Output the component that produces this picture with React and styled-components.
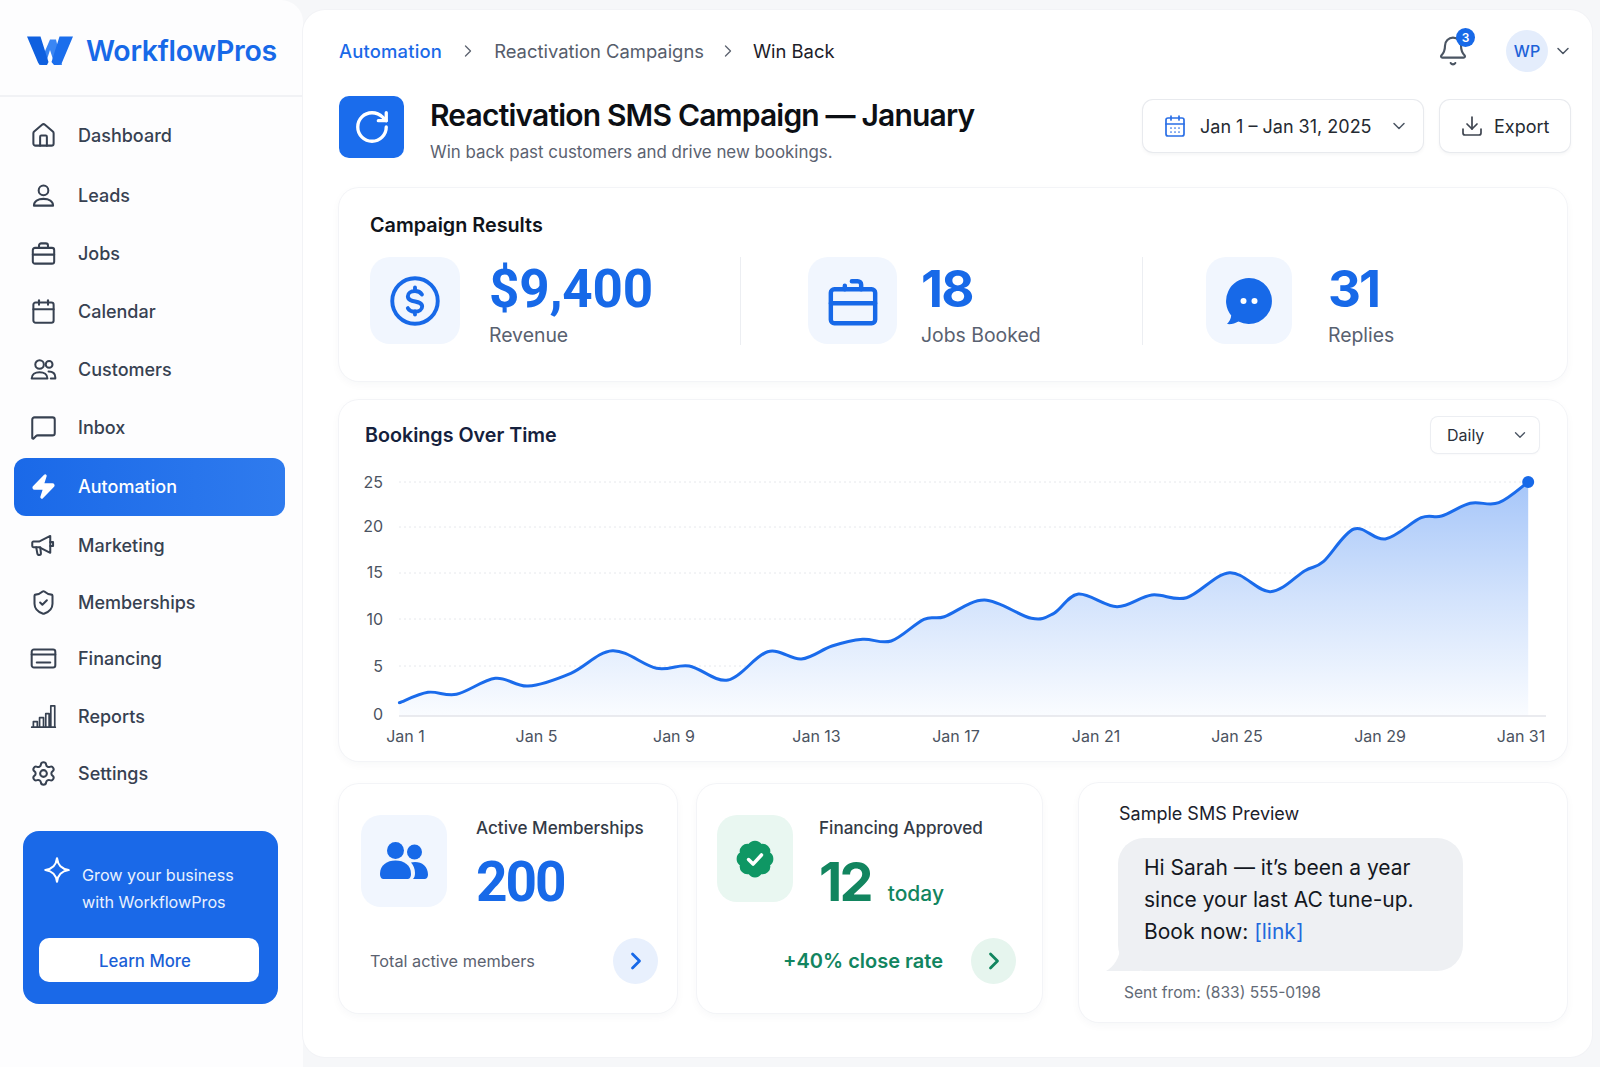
import React from "react";
import styled, { createGlobalStyle } from "styled-components";
import { Home, Calendar, MessageSquare, Zap, ShieldCheck, Settings, RotateCw, Bell, ChevronDown, ChevronRight, CalendarDays, Download } from "lucide-react";

const Global = createGlobalStyle`
  * { box-sizing: border-box; }
  html, body { margin: 0; padding: 0; background: #f6f7f9; }
  body { font-family: Inter, "Liberation Sans", sans-serif; -webkit-font-smoothing: antialiased; }
`;

const Page = styled.div`
  display: grid;
  grid-template-columns: 303px minmax(0, 1fr);
  width: 1600px;
  height: 1067px;
  overflow: hidden;
`;

const Sidebar = styled.aside`
  background: #fdfdfe;
  border-top-right-radius: 22px;
  display: flex;
  flex-direction: column;
`;
const Brand = styled.div`
  height: 97px;
  border-bottom: 2px solid #f1f2f5;
  display: flex;
  align-items: center;
  gap: 13px;
  padding: 6px 0 0 27px;
`;
const BrandName = styled.span`
  font-size: 28.5px;
  font-weight: 600;
  letter-spacing: -0.3px;
  color: #1769e8;
`;
const NavList = styled.nav`
  display: flex;
  flex-direction: column;
  margin-top: 10px;
`;
const NavItem = styled.div`
  height: 57.8px;
  margin: ${p => p.$nudge || 0}px 18px 0 14px;
  padding-left: 16px;
  display: flex;
  align-items: center;
  gap: 21px;
  border-radius: 12px;
  font-size: 18px;
  font-weight: 450;
  color: ${p => (p.$active ? "#fff" : "#374151")};
  background: ${p => (p.$active ? "linear-gradient(90deg,#1a69e8,#2f7bee)" : "transparent")};
  svg { flex: none; width: 27px; height: 27px; }
`;
const Promo = styled.div`
  margin: 28px 0 0 23px;
  width: 255px;
  height: 173px;
  padding: 25px 19px 0 16px;
  background: #1a69e8;
  border-radius: 16px;
  color: #e9f1fe;
`;
const PromoHead = styled.div`
  display: flex;
  gap: 11px;
  padding-left: 4px;
  height: 61px;
  font-size: 16.2px;
  line-height: 27.5px;
  svg { flex: none; width: 28px; height: 28px; }
`;
const PromoText = styled.div`
  margin-top: 6px;
`;
const PromoButton = styled.button`
  width: 220px;
  height: 44px;
  margin-top: 21px;
  padding: 2px 8px 0 0;
  border: none;
  border-radius: 10px;
  background: #fff;
  color: #1b5fd6;
  font: 500 16.8px Inter, sans-serif;
`;

const Main = styled.main`
  margin: 10px 8px 10px 0;
  padding: 0 25px 0 36px;
  background: #fff;
  border-radius: 22px;
  box-shadow: 0 0 0 1px #f2f3f6;
`;
const TopBar = styled.header`
  display: flex;
  align-items: center;
  justify-content: space-between;
  padding: 20px 0 24px;
`;
const Crumbs = styled.div`
  display: flex;
  align-items: center;
  gap: 16px;
  font-size: 18.4px;
  svg { width: 20px; height: 20px; color: #5d6470; }
  svg:last-of-type { margin: 0 -1.5px; }
`;
const Crumb = styled.span`
  color: ${p => p.$tone};
  font-weight: ${p => (p.$tone === "#1a69e8" ? 500 : 400)};
  letter-spacing: ${p => (p.$tone === "#1a69e8" ? "0.2px" : "0")};
`;
const TopRight = styled.div`
  display: flex;
  align-items: center;
  margin-right: -6px;
`;
const BellWrap = styled.div`
  position: relative;
  width: 32px;
  height: 32px;
  margin-right: 37px;
  color: #4b5563;
  svg { width: 32px; height: 32px; stroke-width: 1.6; }
`;
const BellBadge = styled.span`
  position: absolute;
  top: -7px;
  right: -6px;
  width: 19px;
  height: 19px;
  border-radius: 50%;
  background: #1769e8;
  color: #fff;
  font-size: 12px;
  font-weight: 600;
  display: flex;
  align-items: center;
  justify-content: center;
`;
const Avatar = styled.div`
  width: 42px;
  height: 42px;
  border-radius: 50%;
  background: #e4edfc;
  color: #1d62d8;
  font-size: 16px;
  font-weight: 500;
  display: flex;
  align-items: center;
  justify-content: center;
  margin-right: 5px;
`;
const SmallChevron = styled.span`
  display: flex;
  color: #4b5563;
  svg { width: 20px; height: 20px; }
`;
const TitleRow = styled.section`
  display: flex;
  justify-content: space-between;
  align-items: flex-start;
  height: 62px;
`;
const TitleLeft = styled.div`
  display: flex;
  gap: 26px;
`;
const TitleIcon = styled.div`
  width: 65px;
  height: 62px;
  border-radius: 10px;
  background: #1a6cec;
  color: #fff;
  display: flex;
  align-items: center;
  justify-content: center;
  svg { width: 38px; height: 38px; stroke-width: 2.1; }
`;
const Title = styled.h1`
  margin: 0;
  font-size: 30px;
  line-height: 38px;
  font-weight: 600;
  letter-spacing: -0.82px;
  color: #0c0f14;
`;
const Subtitle = styled.p`
  margin: 7px 0 0;
  font-size: 16.9px;
  line-height: 22px;
  color: #5b6270;
`;
const Actions = styled.div`
  display: flex;
  gap: 17px;
  margin: 4px -3px 0 0;
`;
const ActionButton = styled.div`
  height: 52px;
  width: ${p => p.$width}px;
  padding-left: 20px;
  display: flex;
  align-items: center;
  gap: ${p => p.$gap}px;
  background: #fff;
  border-radius: 10px;
  box-shadow: 0 0 0 1px #e8eaee, 0 2px 4px rgba(20, 30, 50, 0.06);
  font-size: 18px;
  color: #252a32;
  svg { flex: none; }
`;
const ActionLabel = styled.span`
  white-space: nowrap;
`;
const Card = styled.section`
  background: #fff;
  border-radius: 20px;
  box-shadow: 0 0 0 1px #f3f4f7, 0 3px 10px rgba(30, 45, 80, 0.04);
`;
const ResultsCard = styled(Card)`
  margin-top: 30px;
  height: 193px;
  padding: 25px 0 0 31px;
`;
const ResultsTitle = styled.h2`
  margin: 0 0 20px;
  font-size: 19.8px;
  line-height: 24px;
  font-weight: 600;
  color: #10141b;
`;
const StatGrid = styled.div`
  display: grid;
  grid-template-columns: 370px 402px 1fr;
`;
const Stat = styled.div`
  display: flex;
  gap: ${p => p.$gap}px;
  padding-left: ${p => p.$pad}px;
  border-left: ${p => (p.$pad ? "1px solid #eceef2" : "none")};
  height: 88px;
`;
const Tile = styled.div`
  flex: none;
  width: ${p => p.$w}px;
  height: ${p => p.$h}px;
  border-radius: 20px;
  background: ${p => p.$bg || "#f1f6fe"};
  display: flex;
  align-items: center;
  justify-content: center;
  color: #1769e8;
`;
const StatBody = styled.div`
  padding-top: 3px;
`;
const StatValue = styled.div`
  font-family: ${p => (p.$narrow ? "Roboto, sans-serif" : "inherit")};
  font-size: ${p => (p.$narrow ? 53 : 51)}px;
  line-height: 58px;
  font-weight: 700;
  letter-spacing: ${p => (p.$narrow ? "-0.2px" : "-1.8px")};
  color: #1769e8;
`;
const StatLabel = styled.div`
  margin-top: 5px;
  font-size: 19.4px;
  line-height: 24px;
  color: #596170;
`;
const ChartCard = styled(Card)`
  margin-top: 19px;
  height: 361px;
  padding: 17px 28px 0 26px;
`;
const ChartHead = styled.div`
  display: flex;
  align-items: center;
  justify-content: space-between;
`;
const ChartTitle = styled.h2`
  margin: 0;
  font-size: 19.7px;
  font-weight: 600;
  color: #15213d;
`;
const SelectBox = styled.div`
  width: 108px;
  height: 36px;
  padding: 0 10px 0 16px;
  display: flex;
  align-items: center;
  justify-content: space-between;
  border-radius: 7px;
  box-shadow: 0 0 0 1px #eceef2, 0 1px 3px rgba(20, 30, 50, 0.05);
  font-size: 16px;
  color: #2b303a;
  svg { width: 18px; height: 18px; color: #4b5563; }
`;
const ChartSvg = styled.svg`
  display: block;
  width: 1228px;
  height: 308px;
  margin: 0 -28px 0 -26px;
`;
const AxisText = styled.text`
  font-family: Inter, sans-serif;
  font-size: 16px;
  fill: #4b5361;
`;
const BottomRow = styled.div`
  display: grid;
  grid-template-columns: 338px 345px minmax(0, 1fr);
  column-gap: 20px;
  margin-top: 23px;
  align-items: start;
`;
const MiniCard = styled(Card)`
  height: 229px;
  display: flex;
  flex-direction: column;
`;
const MiniTop = styled.div`
  display: flex;
  gap: ${p => p.$gap}px;
  padding: 31px 0 0 ${p => p.$pad}px;
  height: 154px;
`;
const MiniLabel = styled.div`
  margin-top: 1px;
  font-size: 17.1px;
  line-height: 24px;
  font-weight: 450;
  color: #333a46;
`;
const MiniValueRow = styled.div`
  display: flex;
  align-items: baseline;
  gap: 17px;
  margin-top: 10px;
`;
const MiniValue = styled.div`
  font-family: ${p => (p.$narrow ? "Roboto, sans-serif" : "inherit")};
  font-size: ${p => (p.$narrow ? 55 : 54)}px;
  line-height: 64px;
  font-weight: 700;
  letter-spacing: ${p => (p.$narrow ? "-2px" : "-2.8px")};
  color: ${p => p.$color};
`;
const Today = styled.span`
  font-size: 21px;
  font-weight: 500;
  color: #12855f;
`;
const MiniFoot = styled.div`
  display: flex;
  align-items: center;
  justify-content: ${p => (p.$end ? "flex-end" : "space-between")};
  gap: 28px;
  padding: 0 ${p => p.$right}px 0 31px;
`;
const FootText = styled.span`
  font-size: 16.3px;
  color: #5b6270;
`;
const FootGreen = styled.span`
  font-size: 20px;
  font-weight: 600;
  color: #12855f;
`;
const ArrowCircle = styled.div`
  width: 45px;
  height: 46px;
  border-radius: 50%;
  background: ${p => p.$bg};
  color: ${p => p.$color};
  display: flex;
  align-items: center;
  justify-content: center;
  svg { width: 28px; height: 28px; stroke-width: 2.4; }
`;
const SmsCard = styled(Card)`
  height: 239px;
  margin: -1px 0 0 17px;
  padding: 19px 0 0 40px;
`;
const SmsTitle = styled.div`
  font-size: 18px;
  line-height: 24px;
  font-weight: 400;
  color: #1c212b;
`;
const Bubble = styled.div`
  position: relative;
  width: 345px;
  height: 133px;
  margin: 12px 0 0 -1px;
  padding: 14px 0 0 26px;
  background: #eef0f3;
  border-radius: 26px;
  font-size: 21px;
  line-height: 32px;
  color: #14181f;
`;
const BubbleTail = styled.svg`
  position: absolute;
  left: -12px;
  bottom: 0;
  width: 34px;
  height: 24px;
`;
const SmsLink = styled.span`
  color: #2268dc;
`;
const SentFrom = styled.div`
  margin: 12px 0 0 5px;
  font-size: 15.6px;
  line-height: 20px;
  color: #636a76;
`;

const pts = [
  [399.4, 702.7], [428, 692.3], [456.5, 694.3], [495.3, 678.3], [528, 686], [570.8, 673.3], [612.4, 650.7], [656.5, 668.3], [689.2, 666], [728, 680],
  [767.6, 651.7], [801.4, 659], [832, 646], [862.7, 639.3], [891.2, 641], [923.9, 619.3], [944.3, 616.7], [984.5, 600], [1031.4, 618.3], [1053.9, 613.3],
  [1078.4, 594], [1117, 606.7], [1151.8, 595], [1186.5, 597.7], [1229.4, 572.7], [1270.2, 591.7], [1304.9, 570.7], [1323.3, 561.7], [1353.9, 529], [1385.3, 539],
  [1421.2, 517.7], [1441.6, 516], [1470.2, 503.3], [1498.8, 502.7], [1528.2, 482],
];
const smooth = list => {
  let d = `M${list[0][0]} ${list[0][1]}`;
  for (let i = 0; i < list.length - 1; i++) {
    const p0 = list[Math.max(0, i - 1)], p1 = list[i], p2 = list[i + 1], p3 = list[Math.min(list.length - 1, i + 2)];
    const k = 6;
    d += ` C${(p1[0] + (p2[0] - p0[0]) / k).toFixed(1)} ${(p1[1] + (p2[1] - p0[1]) / k).toFixed(1)} ${(p2[0] - (p3[0] - p1[0]) / k).toFixed(1)} ${(p2[1] - (p3[1] - p1[1]) / k).toFixed(1)} ${p2[0]} ${p2[1]}`;
  }
  return d;
};
const linePath = smooth(pts);
const areaPath = `${linePath} L1528.2 716 L399.4 716 Z`;

const Stroke = ({ children, w = 1.8 }) => (
  <svg viewBox="0 0 24 24" fill="none" stroke="currentColor" strokeWidth={w} strokeLinecap="round" strokeLinejoin="round">{children}</svg>
);
const LeadIcon = () => <Stroke><circle cx="12" cy="7.5" r="4.3" /><path d="M3.5 21c0-3.8 3.6-6 8.5-6s8.5 2.2 8.5 6z" /></Stroke>;
const JobIcon = () => <Stroke><rect x="2.5" y="7" width="19" height="14" rx="2" /><path d="M8 7V5a2 2 0 0 1 2-2h4a2 2 0 0 1 2 2v2M2.5 13h19" /></Stroke>;
const BigJobIcon = () => <Stroke w={1.9}><rect x="2.5" y="7" width="19" height="14.5" rx="1.5" /><path d="M8.5 7V5.5M15.5 7V5a1.5 1.5 0 0 0-1.5-1.5h-2.5M2.5 13h19" /></Stroke>;
const CustomersIcon = () => <Stroke><circle cx="8.5" cy="7.5" r="3.8" /><circle cx="17" cy="7.5" r="3" /><path d="M1.5 20c0-3.6 3-5.6 7-5.6s7 2 7 5.6z" /><path d="M16.5 13.8c3.5 0 6 1.8 6 5.2v1h-4" /></Stroke>;
const MegaIcon = () => <Stroke><path d="M3 8.5h5l10-5v15l-10-5H3a1 1 0 0 1-1-1v-3a1 1 0 0 1 1-1z" /><path d="M5.5 13.5l1 5.5a1.6 1.6 0 0 0 3.2-.3l-.6-5.2M18 9h2.5v3.5H18" /></Stroke>;
const CardIcon = () => <Stroke><rect x="1.5" y="4" width="21" height="16" rx="2" /><path d="M1.5 8.5h21M6 15.5h12" /></Stroke>;
const BarsIcon = () => <Stroke w={1.5}><path d="M1.5 21.5h21M3 21.5v-5h3.5v5M8.5 21.5v-8.5H12v8.500M14 21.5V9.5h3v12M18.5 21.5V2.5H22v19" /></Stroke>;
const DollarIcon = () => (
  <svg width="52" height="52" viewBox="0 0 24 24" fill="none" stroke="currentColor" strokeWidth="1.8" strokeLinecap="round" strokeLinejoin="round">
    <circle cx="12" cy="12" r="10.5" />
    <path d="M15.2 9c-.6-1-1.8-1.6-3.2-1.6-1.900 0-3.300 1-3.300 2.400 0 3.300 6.600 1.600 6.600 4.700 0 1.400-1.400 2.400-3.300 2.400-1.400 0-2.700-.6-3.300-1.600M12 5.800v1.600M12 16.700v1.500" />
  </svg>
);
const Logo = () => (
  <svg width="46" height="30" viewBox="0 0 46 30">
    <path d="M23 3.500L29 3.500L35 29H30C28.500 29 27.500 28 27 26.500L23 14L19 26.500C18.500 28 17.500 29 16 29H12Z" fill="#3a86f4" />
    <path d="M0 .5H13.500L21.500 26L20 29H15C13 29 11.500 28 11 26.500Z" fill="#0f60df" />
    <path d="M46 .5H32.500L24.500 26L27 29H31C33 29 34.500 28 35 26.500Z" fill="#1b6eec" />
  </svg>
);
const Sparkle = () => (
  <svg viewBox="0 0 24 24" fill="none" stroke="#fff" strokeWidth="1.9" strokeLinejoin="round">
    <path d="M12 2C12.800 8 15.500 11 22 12C15.500 13 12.800 16 12 22C11.200 16 8.500 13 2 12C8.500 11 11.200 8 12 2Z" />
  </svg>
);
const ChatIcon = () => (
  <svg width="50" height="50" viewBox="0 0 50 50">
    <path d="M25 2a23 23 0 1 1-10.500 43.500C11 47.500 7 48.500 3 48c2.500-2.500 4-5.500 4.200-8.500A23 23 0 0 1 25 2z" fill="#1769e8" />
    <circle cx="19.5" cy="25" r="3" fill="#fff" /><circle cx="30.5" cy="25" r="3" fill="#fff" />
  </svg>
);
const PeopleIcon = () => (
  <svg width="48" height="38" viewBox="0 0 48 38" fill="#1769e8">
    <circle cx="15.5" cy="8.5" r="8.5" />
    <circle cx="34.5" cy="10" r="7.5" />
    <path d="M0 32c0-9 7-13.500 15.500-13.500S31 23 31 32c0 2-1 5-3 5H3c-2 0-3-3-3-5z" />
    <path d="M33 37c1.500-1.500 2-3.500 2-6 0-4-1.500-8-4-10.500 1-.3 2.500-.5 4-.5 7 0 13 4.500 13 12.500 0 2-1 4.500-3 4.500z" />
  </svg>
);
const GreenBadge = () => (
  <svg width="42" height="42" viewBox="0 0 24 24">
    <path d="M3.850 8.620a4 4 0 0 1 4.780-4.770 4 4 0 0 1 6.740 0 4 4 0 0 1 4.780 4.780 4 4 0 0 1 0 6.740 4 4 0 0 1-4.770 4.780 4 4 0 0 1-6.750 0 4 4 0 0 1-4.780-4.770 4 4 0 0 1 0-6.760Z" fill="#0f9764" stroke="#0f9764" strokeWidth="1" />
    <path d="m8.300 12.300 2.600 2.600 4.800-5.200" fill="none" stroke="#fff" strokeWidth="2" strokeLinecap="round" strokeLinejoin="round" />
  </svg>
);

const nav = [
  { label: "Dashboard", icon: <Home strokeWidth={1.8} /> },
  { label: "Leads", icon: <LeadIcon />, nudge: 2 },
  { label: "Jobs", icon: <JobIcon />, nudge: 0.5 },
  { label: "Calendar", icon: <Calendar strokeWidth={1.8} /> },
  { label: "Customers", icon: <CustomersIcon /> },
  { label: "Inbox", icon: <MessageSquare strokeWidth={1.8} /> },
  { label: "Automation", icon: <Zap fill="#fff" strokeWidth={1.7} />, active: true, nudge: 1.5 },
  { label: "Marketing", icon: <MegaIcon />, nudge: 1 },
  { label: "Memberships", icon: <ShieldCheck strokeWidth={1.8} />, nudge: -0.5 },
  { label: "Financing", icon: <CardIcon />, nudge: -2 },
  { label: "Reports", icon: <BarsIcon /> },
  { label: "Settings", icon: <Settings strokeWidth={1.8} />, nudge: -0.5 },
];
const yTicks = [["25", 482, 482], ["20", 527, 526], ["15", 573, 572], ["10", 619, 619], ["5", 666, 666]];
const xTicks = [["Jan 1", 405.5], ["Jan 5", 536.5], ["Jan 9", 674], ["Jan 13", 816.5], ["Jan 17", 956], ["Jan 21", 1096], ["Jan 25", 1237], ["Jan 29", 1380], ["Jan 31", 1521]];

export default function App() {
  return (
    <Page>
      <Global />
      <Sidebar>
        <Brand><Logo /><BrandName>WorkflowPros</BrandName></Brand>
        <NavList>
          {nav.map(item => (
            <NavItem key={item.label} $active={item.active} $nudge={item.nudge}>{item.icon}<span>{item.label}</span></NavItem>
          ))}
        </NavList>
        <Promo>
          <PromoHead>
            <Sparkle />
            <PromoText>Grow your business<br />with WorkflowPros</PromoText>
          </PromoHead>
          <PromoButton>Learn More</PromoButton>
        </Promo>
      </Sidebar>
      <Main>
        <TopBar>
          <Crumbs>
            <Crumb $tone="#1a69e8">Automation</Crumb>
            <ChevronRight strokeWidth={1.6} />
            <Crumb $tone="#565d6b">Reactivation Campaigns</Crumb>
            <ChevronRight strokeWidth={1.6} />
            <Crumb $tone="#1c2028">Win Back</Crumb>
          </Crumbs>
          <TopRight>
            <BellWrap><Bell /><BellBadge>3</BellBadge></BellWrap>
            <Avatar>WP</Avatar>
            <SmallChevron><ChevronDown strokeWidth={1.8} /></SmallChevron>
          </TopRight>
        </TopBar>
        <TitleRow>
          <TitleLeft>
            <TitleIcon><RotateCw /></TitleIcon>
            <div>
              <Title>Reactivation SMS Campaign — January</Title>
              <Subtitle>Win back past customers and drive new bookings.</Subtitle>
            </div>
          </TitleLeft>
          <Actions>
            <ActionButton $width={280} $gap={13}>
              <CalendarDays size={24} color="#2a6fe6" strokeWidth={1.7} />
              <ActionLabel>Jan 1 – Jan 31, 2025</ActionLabel>
              <ChevronDown size={20} strokeWidth={1.8} color="#4b5563" style={{ marginLeft: 4 }} />
            </ActionButton>
            <ActionButton $width={130} $gap={10}>
              <Download size={24} strokeWidth={1.7} color="#3f4550" />
              <ActionLabel>Export</ActionLabel>
            </ActionButton>
          </Actions>
        </TitleRow>

        <ResultsCard>
          <ResultsTitle>Campaign Results</ResultsTitle>
          <StatGrid>
            <Stat $gap={29}>
              <Tile $w={90} $h={87}><DollarIcon /></Tile>
              <StatBody><StatValue $narrow>$9,400</StatValue><StatLabel>Revenue</StatLabel></StatBody>
            </Stat>
            <Stat $gap={24} $pad={67}>
              <Tile $w={89} $h={87}><span style={{ width: 56, height: 56, display: "flex" }}><BigJobIcon /></span></Tile>
              <StatBody><StatValue>18</StatValue><StatLabel>Jobs Booked</StatLabel></StatBody>
            </Stat>
            <Stat $gap={36} $pad={63}>
              <Tile $w={86} $h={87}><ChatIcon /></Tile>
              <StatBody><StatValue>31</StatValue><StatLabel>Replies</StatLabel></StatBody>
            </Stat>
          </StatGrid>
        </ResultsCard>

        <ChartCard>
          <ChartHead>
            <ChartTitle>Bookings Over Time</ChartTitle>
            <SelectBox>Daily<ChevronDown strokeWidth={1.8} /></SelectBox>
          </ChartHead>
          <ChartSvg viewBox="339 453 1228 308">
            <defs>
              <linearGradient id="area" gradientUnits="userSpaceOnUse" x1="0" y1="482" x2="0" y2="716">
                <stop offset="0" stopColor="#a6c6f9" />
                <stop offset="0.5" stopColor="#d3e3fc" />
                <stop offset="1" stopColor="#fafcff" />
              </linearGradient>
            </defs>
            {yTicks.map(([t, y, ly]) => (
              <g key={t}>
                <line x1="399" x2="1528" y1={y} y2={y} stroke="#e6e8ec" strokeWidth="1" strokeDasharray="2 3" />
                <AxisText x="383" y={ly + 6} textAnchor="end">{t}</AxisText>
              </g>
            ))}
            <AxisText x="383" y="720" textAnchor="end">0</AxisText>
            <path d={areaPath} fill="url(#area)" />
            <line x1="399" x2="1546" y1="716" y2="716" stroke="#e3e5ea" strokeWidth="1.5" />
            <path d={linePath} fill="none" stroke="#1a6beb" strokeWidth="3" strokeLinecap="round" strokeLinejoin="round" />
            <circle cx="1528.2" cy="482" r="6" fill="#1769e8" />
            {xTicks.map(([t, x]) => (
              <AxisText key={t} x={x} y="742" textAnchor="middle">{t}</AxisText>
            ))}
          </ChartSvg>
        </ChartCard>

        <BottomRow>
          <MiniCard>
            <MiniTop $gap={29} $pad={22}>
              <Tile $w={86} $h={92}><PeopleIcon /></Tile>
              <div>
                <MiniLabel>Active Memberships</MiniLabel>
                <MiniValueRow><MiniValue $narrow $color="#1769e8">200</MiniValue></MiniValueRow>
              </div>
            </MiniTop>
            <MiniFoot $right={19}>
              <FootText>Total active members</FootText>
              <ArrowCircle $bg="#e8f0fd" $color="#1769e8"><ChevronRight /></ArrowCircle>
            </MiniFoot>
          </MiniCard>
          <MiniCard>
            <MiniTop $gap={26} $pad={20}>
              <Tile $w={76} $h={87} $bg="#e9f7f1"><GreenBadge /></Tile>
              <div>
                <MiniLabel>Financing Approved</MiniLabel>
                <MiniValueRow><MiniValue $color="#12855f">12</MiniValue><Today>today</Today></MiniValueRow>
              </div>
            </MiniTop>
            <MiniFoot $end $right={26}>
              <FootGreen>+40% close rate</FootGreen>
              <ArrowCircle $bg="#e6f5ee" $color="#12855f"><ChevronRight /></ArrowCircle>
            </MiniFoot>
          </MiniCard>
          <SmsCard>
            <SmsTitle>Sample SMS Preview</SmsTitle>
            <Bubble>
              <BubbleTail viewBox="0 0 34 24"><path d="M14 0C14 10 8 20 0 24H34V8Z" fill="#eef0f3" /></BubbleTail>
              Hi Sarah — it’s been a year<br />since your last AC tune-up.<br />Book now: <SmsLink>[link]</SmsLink>
            </Bubble>
            <SentFrom>Sent from: (833) 555-0198</SentFrom>
          </SmsCard>
        </BottomRow>
      </Main>
    </Page>
  );
}
